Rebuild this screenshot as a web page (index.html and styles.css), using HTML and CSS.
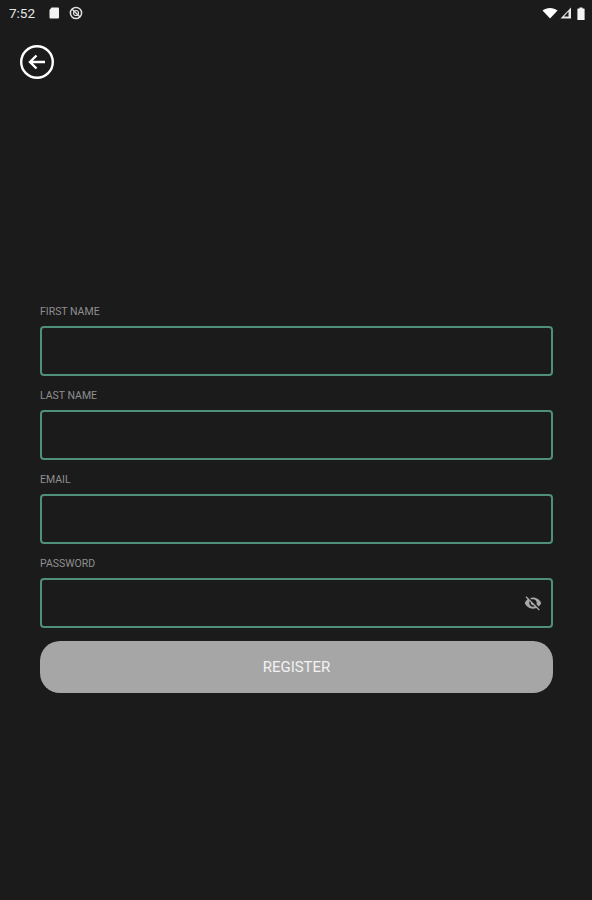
FILE: index.html
```html
<!DOCTYPE html>
<html lang="en">
<head>
  <meta charset="UTF-8" />
  <meta name="viewport" content="width=device-width, initial-scale=1.0" />
  <title>Register</title>
  <link rel="stylesheet" href="styles.css">
</head>
<body>
  <div class="status-bar">
    <div class="status-left">
      <span class="time">7:52</span>
      <svg class="status-icon" viewBox="0 0 14 14">
        <path d="M4.5 1.5H11a1 1 0 0 1 1 1v9a1 1 0 0 1-1 1H3.500a1 1 0 0 1-1-1V4z" fill="#f2f2f2"/>
      </svg>
      <svg class="status-icon" viewBox="0 0 14 14" fill="none" stroke="#e0e0e0">
        <circle cx="7" cy="7" r="5.600" stroke-width="1.500"/>
        <circle cx="7" cy="7" r="2.500" stroke-width="1.200"/>
        <path d="M3 3l8 8" stroke-width="1.500"/>
      </svg>
    </div>
    <div class="status-right">
      <svg class="wifi" viewBox="0 0 16 12"><path d="M0.500 3.500C4.500 0 11.500 0 15.500 3.500L8 11.500z" fill="#fff"/></svg>
      <svg class="signal" viewBox="0 0 12 12">
        <path d="M11 0.500V11.500H0.500z" fill="#e8e8e8"/>
        <path d="M8.500 4.500V9.500H4z" fill="#1b1b1b"/>
      </svg>
      <svg class="battery" viewBox="0 0 8 13"><path d="M2.500 0.500h3v1H7a.6.6 0 0 1 .6.6v10.800a.6.6 0 0 1-.6.6H1a.6.6 0 0 1-.6-.6V2.100A.6.6 0 0 1 1 1.500h1.500z" fill="#f4f4f4"/></svg>
    </div>
  </div>

  <div class="toolbar">
    <button class="back-btn" aria-label="Back">
      <svg viewBox="0 0 34 34" fill="none" stroke="#fff" stroke-width="2.400">
        <circle cx="17" cy="17" r="15.800"/>
        <path d="M25 17H10M16.500 10.500L10 17l6.500 6.500"/>
      </svg>
    </button>
  </div>

  <form class="register-form">
    <div class="field">
      <label>FIRST NAME</label>
      <div class="input-box"><input type="text" /></div>
    </div>
    <div class="field">
      <label>LAST NAME</label>
      <div class="input-box"><input type="text" /></div>
    </div>
    <div class="field">
      <label>EMAIL</label>
      <div class="input-box"><input type="text" /></div>
    </div>
    <div class="field">
      <label>PASSWORD</label>
      <div class="input-box">
        <input type="password" />
        <svg class="eye" viewBox="0 0 24 24">
          <path d="M12 7c2.760 0 5 2.240 5 5 0 .65-.13 1.260-.36 1.830l2.920 2.920c1.510-1.260 2.700-2.890 3.430-4.750-1.730-4.390-6-7.500-11-7.500-1.400 0-2.740.25-3.980.7l2.160 2.160C10.740 7.130 11.350 7 12 7zM2 4.270l2.280 2.280.46.46C3.080 8.300 1.780 10.020 1 12c1.730 4.390 6 7.500 11 7.500 1.550 0 3.030-.3 4.380-.84l.42.42L19.730 22 21 20.730 3.270 3 2 4.270zM7.530 9.800l1.550 1.550c-.05.21-.08.43-.08.65 0 1.660 1.340 3 3 3 .22 0 .44-.03.65-.08l1.550 1.550c-.67.33-1.410.53-2.200.53-2.760 0-5-2.240-5-5 0-.79.2-1.530.53-2.200z" fill="#a8a8a8"/>
        </svg>
      </div>
    </div>
    <button type="button" class="register-btn">REGISTER</button>
  </form>
</body>
</html>
```

FILE: styles.css
```css
* {
  box-sizing: border-box;
}

body {
  margin: 0;
  height: 900px;
  overflow: hidden;
  font-family: 'Roboto', 'Liberation Sans', sans-serif;
  background-color: #1b1b1b;
  color: white;
}

.status-bar {
  height: 26px;
  padding: 0 7px 0 9px;
  display: flex;
  justify-content: space-between;
  align-items: center;
}

.status-left {
  display: flex;
  align-items: center;
}

.time {
  font-size: 13.500px;
  color: #e6e6e6;
  margin-right: 12px;
}

.status-icon {
  width: 14px;
  height: 14px;
  margin-right: 8px;
}

.status-right {
  display: flex;
  align-items: center;
  gap: 2px;
}

.wifi {
  width: 16px;
  height: 12px;
}

.signal {
  width: 12px;
  height: 12px;
}

.battery {
  width: 8px;
  height: 13px;
  margin-left: 3px;
}

.toolbar {
  padding: 19px 0 0 20px;
}

.back-btn {
  display: block;
  width: 34px;
  height: 34px;
  padding: 0;
  border: none;
  background: none;
}

.back-btn svg {
  display: block;
  width: 34px;
  height: 34px;
}

.register-form {
  margin: 0 39px 0 40px;
  padding-top: 223px;
}

.field {
  height: 84px;
}

.field label {
  display: block;
  height: 24px;
  font-size: 10.500px;
  line-height: 18px;
  padding-top: 1px;
  color: #8f8f8f;
}

.input-box {
  height: 50px;
  padding: 0 10px;
  display: flex;
  align-items: center;
  border: 2px solid #4f8f7c;
  border-radius: 4px;
}

.input-box input {
  flex: 1;
  min-width: 0;
  border: none;
  outline: none;
  background: none;
  color: white;
}

.eye {
  width: 18px;
  height: 18px;
  flex-shrink: 0;
  margin-right: -1px;
}

.register-btn {
  display: block;
  width: 100%;
  height: 52px;
  margin-top: 3px;
  border: none;
  border-radius: 20px;
  background-color: #a6a6a6;
  color: #f2f2f2;
  font-family: inherit;
  font-size: 15px;
}
```
